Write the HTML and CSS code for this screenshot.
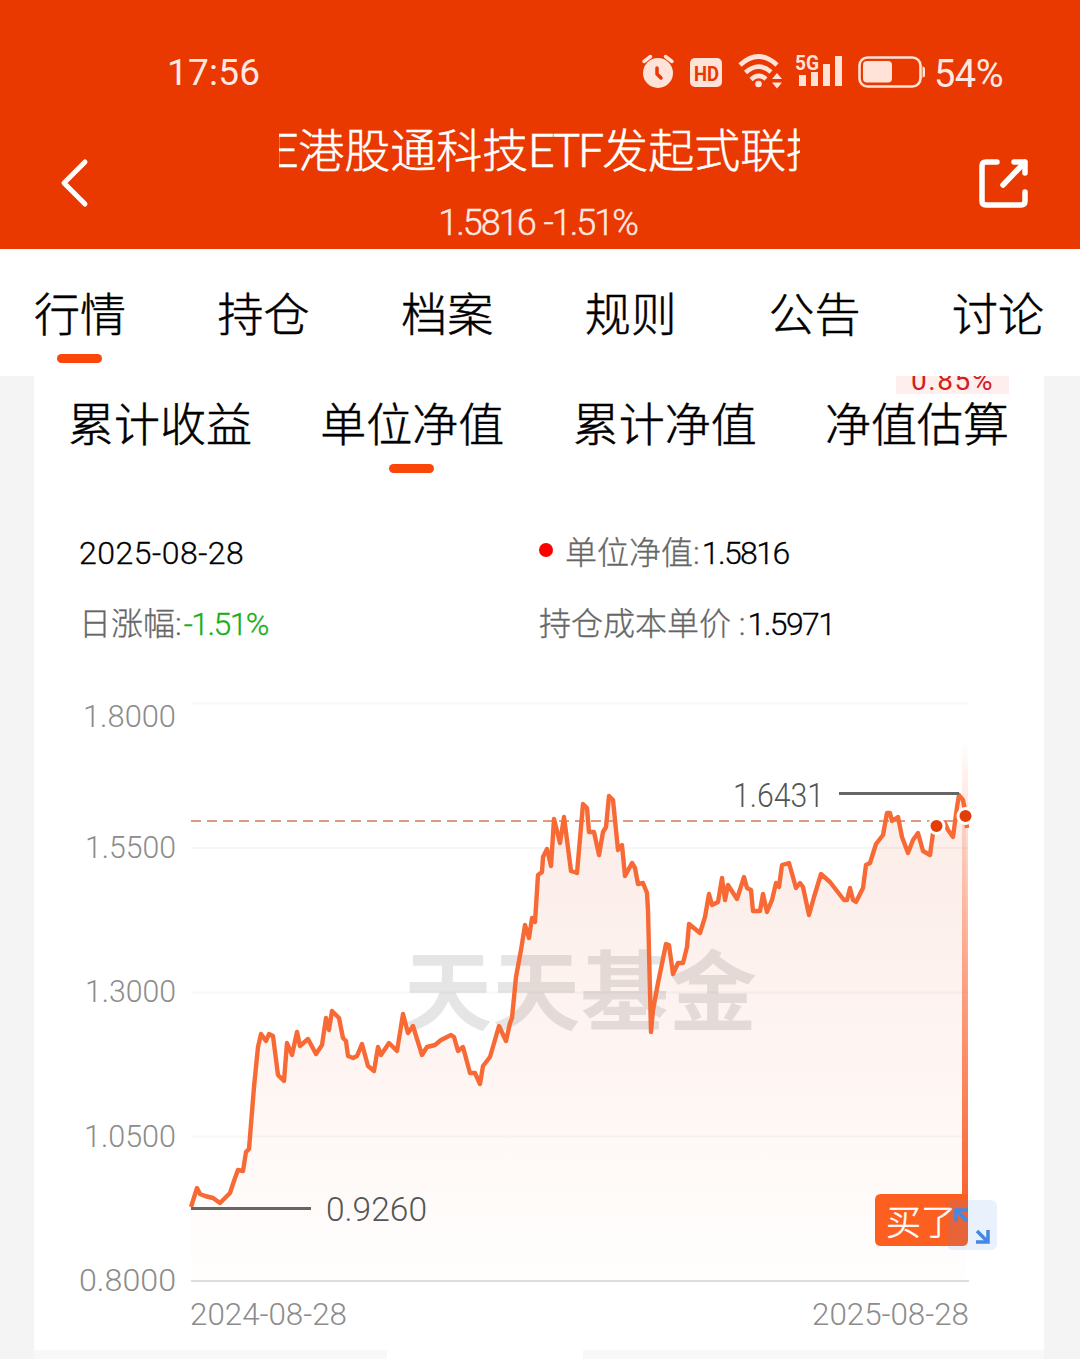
FILE: index.html
```html
<!DOCTYPE html>
<html lang="zh-CN">
<head>
    <meta charset="UTF-8">
    <meta name="viewport" content="width=device-width, initial-scale=1.0">
    <title>单位净值</title>
    <link rel="stylesheet" href="styles.css">
</head>
<body>
    <header class="header">
        <div class="status-bar">
            <span class="time">17:56</span>
            <svg class="status-icons" width="290" height="50" viewBox="635 47 290 50" fill="#ffe2d8">
                <!-- alarm -->
                <circle cx="658" cy="73" r="15"/>
                <path d="M644 61.500l6.500-5M672 61.500l-6.500-5" stroke="#ffe2d8" stroke-width="3.500" stroke-linecap="round"/>
                <path d="M657 68v6l4 4" fill="none" stroke="#e93800" stroke-width="3.500" stroke-linecap="round" stroke-linejoin="round"/>
                <!-- HD -->
                <rect x="690" y="58" width="32" height="29" rx="5"/>
                <text class="hd" x="694" y="80.500" textLength="25" lengthAdjust="spacingAndGlyphs">HD</text>
                <!-- wifi -->
                <g fill="none" stroke="#ffe2d8" stroke-width="4.600">
                    <path d="M740 65Q758.500 48 777 65"/>
                    <path d="M745.500 72.500Q758.500 61 771 72"/>
                    <path d="M751 79.500Q758.500 72.500 766 79"/>
                </g>
                <circle cx="758.500" cy="84" r="3.300"/>
                <path d="M772 79l5-6 5 6zM772 82.500l5 6 5-6z"/>
                <!-- signal -->
                <text class="net" x="795" y="69.500" textLength="24" lengthAdjust="spacingAndGlyphs">5G</text>
                <path d="M799 75h7v11h-7zM811 72h7v14h-7zM823 64h7v22h-7zM835 56h7v30h-7z"/>
                <!-- battery -->
                <rect x="859.500" y="57.500" width="61" height="29" rx="8" fill="none" stroke="#ffe2d8" stroke-width="2.600"/>
                <rect x="863" y="61" width="29" height="21.500" rx="4"/>
                <path d="M922.500 66.500q2.500 0 2.500 2.500v6q0 2.500-2.500 2.500z"/>
            </svg>
            <span class="battery">54%</span>
        </div>
        <div class="nav-bar">
            <svg class="back" width="30" height="52" viewBox="0 0 30 52">
                <path d="M25 5L4 26l21 21" fill="none" stroke="#fff" stroke-width="5" stroke-linecap="round" stroke-linejoin="round"/>
            </svg>
            <div class="fund">
                <div class="fund-name"><span>E港股通科技<i>ETF</i>发起式联接</span></div>
                <div class="fund-value">1.5816 -1.51%</div>
            </div>
            <svg class="share" width="52" height="52" viewBox="0 0 52 52">
                <path d="M19 4H8q-4 0-4 4v35q0 4 4 4h35q4 0 4-4v-9M36 4h11v11M47 4L25 27" fill="none" stroke="#fff" stroke-width="5.500" stroke-linecap="round" stroke-linejoin="round"/>
            </svg>
        </div>
    </header>

    <nav class="tabs main-tabs">
        <span class="tab active">行情</span>
        <span class="tab">持仓</span>
        <span class="tab">档案</span>
        <span class="tab">规则</span>
        <span class="tab">公告</span>
        <span class="tab">讨论</span>
    </nav>

    <main class="card">
        <span class="estimate">0.85%</span>
        <nav class="tabs sub-tabs">
            <span class="tab">累计收益</span>
            <span class="tab active">单位净值</span>
            <span class="tab">累计净值</span>
            <span class="tab">净值估算</span>
        </nav>

        <div class="info">
            <div><span class="num date">2025-08-28</span></div>
            <div><span class="dot"></span><span class="label">单位净值:</span><span class="num">1.5816</span></div>
            <div><span class="label">日涨幅:</span><span class="num down">-1.51%</span></div>
            <div><span class="label">持仓成本单价 :</span><span class="num">1.5971</span></div>
        </div>

        <svg class="chart" width="1010" height="670" viewBox="34 680 1010 670">
            <defs>
                <linearGradient id="area" x1="0" y1="795" x2="0" y2="1280" gradientUnits="userSpaceOnUse">
                    <stop offset="0" stop-color="#fbece7"/>
                    <stop offset="0.500" stop-color="#fef4f1"/>
                    <stop offset="1" stop-color="#fffefd"/>
                </linearGradient>
                <linearGradient id="bar" x1="0" y1="740" x2="0" y2="1195" gradientUnits="userSpaceOnUse">
                    <stop offset="0" stop-color="#fa6432" stop-opacity="0"/>
                    <stop offset="0.450" stop-color="#fa6432" stop-opacity="0.500"/>
                    <stop offset="1" stop-color="#fa6432"/>
                </linearGradient>
            </defs>

            <path fill="url(#area)" d="M191 1207 197 1188 200 1194 205 1196 213 1198 220 1203 230 1193 235 1178 238 1170 243 1171 246 1152 249 1149 254 1087 258 1047 261 1034 266 1041 269 1034 273 1036 278 1075 284 1081 287 1043 292 1055 297 1032 300 1046 308 1039 316 1054 322 1045 326 1018 329 1030 332 1011 339 1018 343 1038 346 1041 348 1056 353 1058 357 1056 362 1044 368 1066 374 1071 378 1047 381 1055 389 1043 397 1051 403 1014 408 1033 413 1026 422 1055 427 1047 435 1045 441 1040 451 1035 458 1051 463 1047 470 1073 475 1073 480 1084 483 1066 490 1057 499 1026 506 1041 512 1018 516 977 521 950 525 925 529 938 532 918 535 922 538 875 542 872 547 849 551 866 554 819 560 843 564 817 571 871 577 873 583 804 587 808 589 832 594 832 599 855 606 827 609 796 613 800 618 850 622 845 625 876 632 863 638 884 643 883 647 893 648 910 651 1032 658 983 666 944 669 945 673 974 678 963 683 963 687 947 689 924 700 933 705 917 709 894 712 905 718 902 722 878 725 900 728 885 737 899 744 877 747 888 751 890 753 911 760 911 763 894 767 912 776 883 779 887 782 865 789 863 796 888 800 883 803 887 809 915 814 897 821 874 830 882 844 900 847 900 850 888 856 902 863 888 866 865 870 863 876 844 883 835 887 813 890 813 892 821 898 817 902 837 908 853 918 833 923 851 930 855 933 833 937 826 945 823 953 837 957 807 959 795 963 800 966 816V1280H191Z"/>

            <path class="grid" d="M191 703.500H969M191 848H969M191 992.500H969M191 1136.500H969"/>
            <path class="axis" d="M191 1281H969"/>
            <path class="cost" d="M191 821H960"/>

            <text class="watermark" x="404" y="1024" textLength="353" lengthAdjust="spacingAndGlyphs">天天基金</text>

            <path class="line" d="M191 1207 197 1188 200 1194 205 1196 213 1198 220 1203 230 1193 235 1178 238 1170 243 1171 246 1152 249 1149 254 1087 258 1047 261 1034 266 1041 269 1034 273 1036 278 1075 284 1081 287 1043 292 1055 297 1032 300 1046 308 1039 316 1054 322 1045 326 1018 329 1030 332 1011 339 1018 343 1038 346 1041 348 1056 353 1058 357 1056 362 1044 368 1066 374 1071 378 1047 381 1055 389 1043 397 1051 403 1014 408 1033 413 1026 422 1055 427 1047 435 1045 441 1040 451 1035 454 1037 458 1051 463 1047 470 1073 475 1073 480 1084 483 1066 490 1057 499 1026 506 1041 510 1023 512 1018 516 977 521 950 525 925 529 938 532 918 535 922 538 875 542 872 543 857 547 849 551 866 554 819 560 843 564 817 571 871 577 873 583 804 587 808 589 832 594 832 599 855 603 832 606 827 609 796 613 800 618 850 622 845 625 876 632 863 635 868 638 884 643 883 647 893 648 910 651 1032 653 1010 658 983 666 944 669 945 673 974 678 963 683 963 687 947 689 924 700 933 705 917 709 894 712 905 718 902 722 878 725 900 728 885 737 899 744 877 747 888 751 890 753 911 760 911 763 894 767 912 772 900 776 883 779 887 782 865 789 863 796 888 800 883 803 887 809 915 814 897 821 874 830 882 844 900 847 900 850 888 853 900 856 902 863 888 866 865 870 863 876 844 883 835 887 813 890 813 892 821 898 817 902 837 908 853 913 840 918 833 923 851 930 855 933 833 937 826 945 823 948 830 953 837 957 807 959 795 963 800 966 816 967 828"/>

            <rect x="962" y="740" width="6" height="456" fill="url(#bar)"/>
            <path class="mark" d="M191 1208.500H311M839 793.500H959"/>
            <g class="point">
                <circle cx="936.500" cy="826" r="7.500"/>
                <circle cx="965.500" cy="816" r="7.500"/>
            </g>

            <g class="mark-text">
                <text x="326" y="1221" textLength="101" lengthAdjust="spacingAndGlyphs">0.9260</text>
                <text x="733" y="807" textLength="91" lengthAdjust="spacingAndGlyphs">1.6431</text>
            </g>
            <g class="axis-text">
                <text x="83" y="727" textLength="93" lengthAdjust="spacingAndGlyphs">1.8000</text>
                <text x="85" y="858" textLength="91" lengthAdjust="spacingAndGlyphs">1.5500</text>
                <text x="85" y="1002" textLength="91" lengthAdjust="spacingAndGlyphs">1.3000</text>
                <text x="84" y="1147" textLength="92" lengthAdjust="spacingAndGlyphs">1.0500</text>
                <text x="79" y="1291" textLength="97" lengthAdjust="spacingAndGlyphs">0.8000</text>
                <text x="190" y="1325" textLength="157" lengthAdjust="spacingAndGlyphs">2024-08-28</text>
                <text x="812" y="1325" textLength="157" lengthAdjust="spacingAndGlyphs">2025-08-28</text>
            </g>

            <!-- buy flag -->
            <path d="M881 1194H968V1240q0 6-6 6H881q-6 0-6-6V1200q0-6 6-6z" fill="#fd5f20"/>
            <text class="buy" x="886" y="1235" textLength="70">买了</text>

            <!-- expand -->
            <rect x="947" y="1200" width="50" height="50" rx="6" fill="#4c8ae8" fill-opacity="0.120"/>
            <path d="M956 1222v-12h12M956 1210l11 11" class="arrow"/>
            <path d="M988 1230v12h-12M988 1242l-11-11" class="arrow"/>
        </svg>
    </main>
    <div class="next"></div>
</body>
</html>
```
FILE: styles.css
```css
body {
    margin: 0;
    width: 1080px;
    height: 1359px;
    overflow: hidden;
    display: flex;
    flex-direction: column;
    background-color: #f4f4f4;
    font-family: Roboto, "Noto Sans CJK SC", sans-serif;
    font-weight: 300;
    color: #000;
}
.header {
    height: 249px;
    background-color: #e93800;
    color: #fff;
}
.status-bar {
    display: flex;
    align-items: center;
    height: 50px;
    padding: 47px 76px 0 167px;
    color: #ffe9e2;
    font-weight: 400;
}
.time {
    width: 468px;
    font-size: 37px;
    letter-spacing: 0.2px;
}
.battery {
    margin: 3px 0 0 9px;
    font-size: 38px;
    letter-spacing: -0.5px;
}
.hd {
    font: bold 20px Roboto, sans-serif;
    fill: #e93800;
}
.net {
    font: bold 21px Roboto, sans-serif;
}
.nav-bar {
    display: flex;
    justify-content: space-between;
    padding: 21px 50px 0 60px;
}
.back {
    margin-top: 39px;
}
.share {
    margin-top: 40px;
}
.fund {
    width: 521px;
    margin-left: 11px;
    text-align: center;
}
.fund-name {
    height: 66px;
    line-height: 66px;
    overflow: hidden;
    white-space: nowrap;
    text-align: left;
    font-size: 46px;
    -webkit-text-stroke: 0.5px;
}
.fund-name span {
    margin-left: -7px;
}
.fund-name i {
    font-style: normal;
    letter-spacing: -2px;
}
.fund-value {
    margin-top: 18px;
    line-height: 42px;
    font-size: 36px;
    letter-spacing: -2px;
    word-spacing: 2px;
    margin-right: 4px;
    -webkit-text-stroke: 0.4px;
    color: #ffeae3;
}
.tabs {
    display: flex;
    justify-content: space-between;
    font-size: 46px;
    line-height: 66px;
    -webkit-text-stroke: 0.5px;
}
.main-tabs {
    height: 94px;
    padding: 33px 36px 0 34px;
    background-color: #fff;
}
.tab {
    display: flex;
    flex-direction: column;
    align-items: center;
}
.tab.active::after {
    content: "";
    width: 45px;
    height: 9px;
    margin: 6px 2px 0 0;
    border-radius: 4.5px;
    background-color: #fa4609;
}
.card {
    position: relative;
    width: 1010px;
    height: 974px;
    margin-left: 34px;
    overflow: hidden;
    background-color: #fff;
}
.sub-tabs {
    position: relative;
    padding: 16px 35px 0 34px;
}
.estimate {
    position: absolute;
    top: -14px;
    left: 862px;
    width: 113px;
    height: 32px;
    line-height: 38px;
    text-align: center;
    font-size: 28px;
    font-weight: 400;
    letter-spacing: 1.6px;
    color: #d02020;
    background-color: #ffeeee;
}
.info {
    display: grid;
    grid-template-columns: 460px auto;
    row-gap: 23px;
    padding: 56px 0 0 45px;
    line-height: 48px;
    font-size: 32px;
    -webkit-text-stroke: 0.3px;
}
.info > div {
    display: flex;
    align-items: center;
}
.label {
    color: #666;
}
.num {
    margin-left: 2px;
    letter-spacing: -1.6px;
}
.date {
    margin-left: 0;
    letter-spacing: 0.5px;
}
.down {
    color: #1aad19;
}
.dot {
    width: 14px;
    height: 14px;
    margin: -6px 12px 0 0;
    border-radius: 50%;
    background-color: #f00;
}
.chart {
    display: block;
    margin-top: 32px;
}
.grid {
    fill: none;
    stroke: rgba(0, 0, 0, 0.03);
    stroke-width: 2;
}
.axis {
    stroke: #ddd;
    stroke-width: 2;
}
.cost {
    stroke: #e29a7c;
    stroke-width: 2;
    stroke-dasharray: 10 6;
}
.line {
    fill: none;
    stroke: #f76a35;
    stroke-width: 4.4;
    stroke-linejoin: round;
}
.mark {
    stroke: #666;
    stroke-width: 3;
}
.point {
    fill: #e23e05;
    stroke: #fff;
    stroke-width: 3;
}
.mark-text {
    font-size: 33px;
    fill: #555;
}
.axis-text {
    font-size: 31px;
    fill: #8c8c8c;
}
.watermark {
    font-size: 87px;
    font-weight: 700;
    fill: #000;
    fill-opacity: 0.1;
}
.buy {
    font-size: 35px;
    fill: #fff;
    stroke: #fff;
    stroke-width: 0.5;
}
.arrow {
    fill: none;
    stroke: #4488e4;
    stroke-width: 3.5;
}
.next {
    width: 196px;
    height: 9px;
    background-color: #fff;
    border-left: 353px solid #f8f8f8;
    border-right: 461px solid #f8f8f8;
    margin-left: 34px;
}
```
